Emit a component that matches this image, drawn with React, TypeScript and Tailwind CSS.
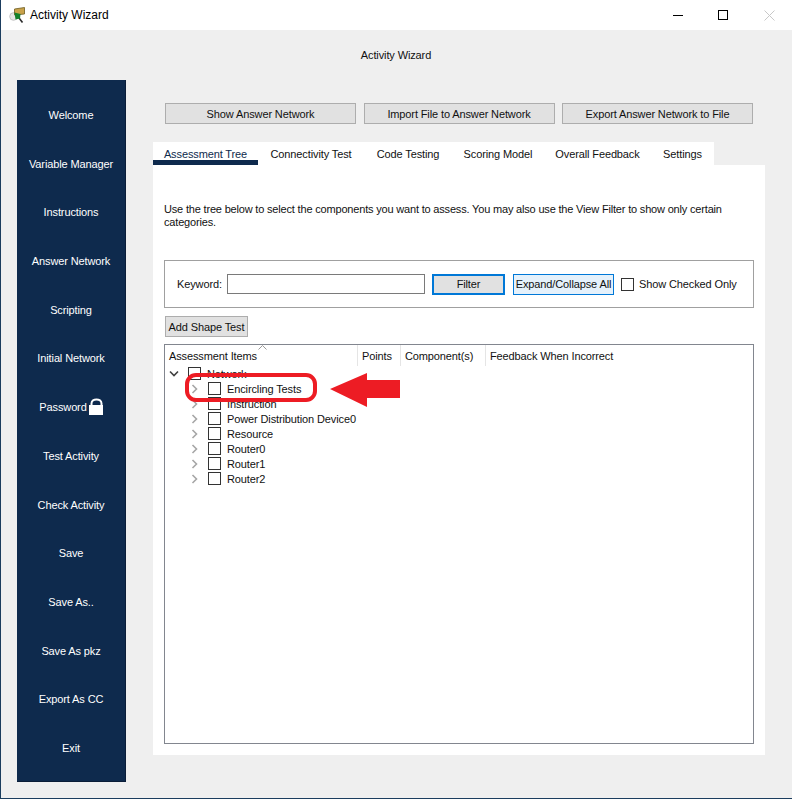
import React from "react";

const navItems = [
  "Welcome",
  "Variable Manager",
  "Instructions",
  "Answer Network",
  "Scripting",
  "Initial Network",
  "Password",
  "Test Activity",
  "Check Activity",
  "Save",
  "Save As..",
  "Save As pkz",
  "Export As CC",
  "Exit",
];

const tabs = [
  { label: "Assessment Tree", w: "w-[105px]" },
  { label: "Connectivity Test", w: "w-[106px]" },
  { label: "Code Testing", w: "w-[88px]" },
  { label: "Scoring Model", w: "w-[92px]" },
  { label: "Overall Feedback", w: "w-[107px]" },
  { label: "Settings", w: "w-[63px]" },
];

const children = [
  "Encircling Tests",
  "Instruction",
  "Power Distribution Device0",
  "Resource",
  "Router0",
  "Router1",
  "Router2",
];

function Chevron({ open }: { open?: boolean }) {
  return open ? (
    <svg width="10" height="7" viewBox="0 0 10 7" className="shrink-0">
      <path d="M1 1.5 L5 5.5 L9 1.5" fill="none" stroke="#404040" strokeWidth="1.6" />
    </svg>
  ) : (
    <svg width="7" height="10" viewBox="0 0 7 10" className="shrink-0">
      <path d="M1.5 1 L5.5 5 L1.5 9" fill="none" stroke="#a6a6a6" strokeWidth="1.6" />
    </svg>
  );
}

function Box() {
  return <div className="w-[13px] h-[13px] shrink-0 border border-[#333333] bg-white" />;
}

function AppIcon() {
  return (
    <svg width="17" height="17" viewBox="0 0 17 17" className="shrink-0">
      <circle cx="4.5" cy="9.5" r="3.8" fill="#e6e6e6" stroke="#c4c4c4" strokeWidth="1" />
      <path d="M10 11 L13.5 15.5" stroke="#2b2b2b" strokeWidth="1.6" />
      <path d="M5.5 2 L15.5 0.5 L15.5 7 L5.5 8 Z" fill="#c9a24a" stroke="#6b5a20" strokeWidth="0.8" />
      <path d="M5.5 5.5 L11.5 7 L11 11.5 L6.5 12.5 Z" fill="#12802a" />
    </svg>
  );
}

function Lock() {
  return (
    <svg width="14" height="17" viewBox="0 0 14 17" className="shrink-0 ml-[2px] mb-[3px]">
      <path d="M2.5 8 V5.5 C2.5 0 12.5 0 12.5 5.5 V8" fill="none" stroke="#ffffff" strokeWidth="2" />
      <rect x="0" y="7" width="14" height="10" fill="#ffffff" />
    </svg>
  );
}

const topBtn =
  "w-[191px] h-[21px] pt-px bg-[#e1e1e1] border border-[#adadad] flex items-center justify-center text-[#111111]";

export default function App() {
  return (
    <div className="relative w-[792px] h-[799px] overflow-hidden bg-[#efefef] border-l border-b border-[#1b3d5e] flex flex-col text-[11px] tracking-[-0.12px] leading-[13px] text-[#111111] font-['Liberation_Sans',Arial,sans-serif]">
      {/* Title bar */}
      <div className="h-[30px] shrink-0 bg-white flex items-center pl-2">
        <AppIcon />
        <span className="ml-[4px] text-black text-[12px] tracking-normal">Activity Wizard</span>
        <div className="ml-auto flex items-center">
          <div className="w-[10px] h-px bg-black mr-[35px]" />
          <div className="w-[10px] h-[10px] border border-black mr-[36px]" />
          <svg width="11" height="11" viewBox="0 0 11 11" className="mr-[17px]">
            <path d="M0.5 0.5 L10.5 10.5 M10.5 0.5 L0.5 10.5" stroke="#c8c8c8" strokeWidth="1" />
          </svg>
        </div>
      </div>

      {/* Heading */}
      <div className="h-[50px] shrink-0 flex items-center justify-center pr-[1px]">
        <span>Activity Wizard</span>
      </div>

      {/* Main row */}
      <div className="flex">
        <nav className="ml-4 w-[109px] h-[702px] shrink-0 bg-[#0e2a4d] border-r border-b border-[#0a1d38] pt-[11px] flex flex-col text-white">
          {navItems.map((n) => (
            <div key={n} className="h-[48.72px] shrink-0 flex items-center justify-center">
              <span>{n}</span>
              {n === "Password" && <Lock />}
            </div>
          ))}
        </nav>

        <div className="ml-[27px] w-[612px] shrink-0">
          <div className="pt-[23px] pl-3 flex gap-[7.5px]">
            <button className={topBtn}>Show Answer Network</button>
            <button className={topBtn}>Import File to Answer Network</button>
            <button className={topBtn}>Export Answer Network to File</button>
          </div>

          {/* Tabs */}
          <div className="mt-[18px] flex">
            {tabs.map((t, i) => (
              <div
                key={t.label}
                className={`${t.w} h-[23px] bg-white flex items-start justify-center pt-[6px] ${
                  i === 0 ? "border-b-[5px] border-[#0e2a4d] text-[#0e2a4d]" : ""
                }`}
              >
                {t.label}
              </div>
            ))}
          </div>

          {/* Panel */}
          <div className="relative h-[590px] bg-white px-[11px] pt-[38px]">
            <p className="whitespace-nowrap tracking-[-0.18px]">
              Use the tree below to select the components you want to assess. You may also use the View Filter to show only certain
              <br />
              categories.
            </p>

            <div className="mt-[31px] h-[48px] border border-[#a0a0a0] flex items-center pl-3">
              <span className="w-[50px] shrink-0 pt-px">Keyword:</span>
              <div className="w-[198px] h-[20px] border border-[#7a7a7a] bg-white" />
              <button className="ml-[7px] w-[73px] h-[21px] pt-px bg-[#e1e1e1] border-2 border-[#0078d7] flex items-center justify-center">
                Filter
              </button>
              <button className="ml-2 w-[101px] h-[21px] pt-px bg-[#e5f1fb] border border-[#0078d7] flex items-center justify-center whitespace-nowrap">
                Expand/Collapse All
              </button>
              <div className="ml-[7px] w-[13px] h-[13px] shrink-0 border border-[#333333] bg-white" />
              <span className="ml-[5px] pt-px whitespace-nowrap">Show Checked Only</span>
            </div>

            <button className="mt-2 ml-px w-[83px] h-[21px] pt-px bg-[#e1e1e1] border border-[#adadad] flex items-center justify-center whitespace-nowrap">
              Add Shape Test
            </button>

            {/* Tree list */}
            <div className="mt-[7px] h-[400px] border border-[#82868f] bg-white">
              <div className="relative flex h-[21px] items-center">
                <div className="w-[193px] pl-1 pt-px h-full flex items-center border-r border-[#e5e5e5]">Assessment Items</div>
                <div className="w-[43px] pl-1 pt-px h-full flex items-center border-r border-[#e5e5e5]">Points</div>
                <div className="w-[85px] pl-1 pt-px h-full flex items-center border-r border-[#e5e5e5]">Component(s)</div>
                <div className="pl-1 pt-px h-full flex items-center">Feedback When Incorrect</div>
                <svg width="9" height="5" viewBox="0 0 9 5" className="absolute left-[93px] top-0">
                  <path d="M0.5 4.5 L4.5 0.5 L8.5 4.5" fill="none" stroke="#9a9a9a" strokeWidth="1" />
                </svg>
              </div>
              <div>
                <div className="h-[15px] flex items-center pl-1">
                  <Chevron open />
                  <div className="ml-[9px]">
                    <Box />
                  </div>
                  <span className="ml-[6px] pt-px">Network</span>
                </div>
                {children.map((c) => (
                  <div key={c} className="h-[15px] flex items-center pl-[26px]">
                    <Chevron />
                    <div className="ml-[10px]">
                      <Box />
                    </div>
                    <span className="ml-[6px] pt-px whitespace-nowrap">{c}</span>
                  </div>
                ))}
              </div>
            </div>
          </div>
        </div>
      </div>

      {/* Red annotation drawn over the tree */}
      <svg width="230" height="50" viewBox="0 0 230 50" className="absolute left-[184px] top-[366px]">
        <rect x="2" y="9" width="128" height="25" rx="9" fill="none" stroke="#ed1c24" strokeWidth="4" />
        <path d="M145 23 L182 7 L182 14 L215 14 L215 32 L182 32 L182 41 Z" fill="#ed1c24" />
      </svg>
    </div>
  );
}
